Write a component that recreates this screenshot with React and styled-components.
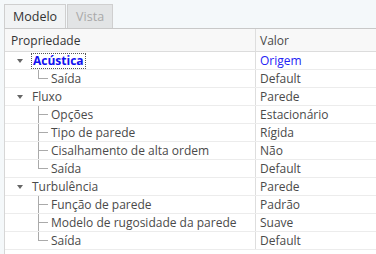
import React from "react";
import styled, { createGlobalStyle } from "styled-components";

const GlobalStyle = createGlobalStyle`
  body {
    margin: 0;
    background: #f4f8fa;
    font-family: "Open Sans", "Noto Sans", sans-serif;
  }
`;

const Page = styled.div`
  width: 376px;
  height: 254px;
  overflow: hidden;
  padding: 4px 0 0 4px;
  box-sizing: border-box;
  display: flex;
  flex-direction: column;
`;

const TabBar = styled.div`
  display: flex;
  height: 24px;
  flex-shrink: 0;
`;

const Tab = styled.div`
  display: flex;
  align-items: center;
  padding: 0 8px;
  font-size: 12.5px;
  border: 1px solid #cfcfcf;
  border-bottom: none;
  margin-right: 1px;
  color: ${(p) => (p.$active ? "#333" : "#a9a9a9")};
  background: ${(p) => (p.$active ? "#f1f3f4" : "#e2e4e5")};
`;

const Panel = styled.div`
  flex: 1;
  min-height: 0;
  background: #fff;
  border-top: 1px solid #c8c8c8;
  border-left: 1px solid #d6d6d6;
`;

const Row = styled.div`
  display: grid;
  grid-template-columns: 250px 1fr;
  height: 17px;
  border-bottom: 1px solid #ececec;
  font-size: 12px;
  color: #4a4a4a;
`;

const HeaderRow = styled(Row)`
  height: 22px;
  background: #f8f8f8;
  border-bottom: 1px solid #dcdcdc;
  color: #333;
`;

const Cell = styled.div`
  display: flex;
  align-items: center;
  position: relative;
  white-space: nowrap;
  overflow: hidden;
  padding-left: ${(p) => p.$indent || 6}px;
`;

const ValueCell = styled(Cell)`
  border-left: 1px solid #dedede;
  padding-left: 4px;
  color: ${(p) => (p.$blue ? "#2323f5" : "#4a4a4a")};
`;

const Arrow = styled.span`
  width: 0;
  height: 0;
  border-left: 3px solid transparent;
  border-right: 3px solid transparent;
  border-top: 4px solid #666;
  margin: 0 9px 0 6px;
`;

const Focus = styled.span`
  color: #1010f0;
  font-weight: 700;
  outline: 1px dotted #555;
  padding: 0 1px;
  line-height: 14px;
`;

const Connector = styled.span`
  position: absolute;
  left: 33px;
  top: 0;
  width: 9px;
  height: ${(p) => (p.$last ? "9px" : "17px")};
  border-left: 1px solid #aaa;
  &::after {
    content: "";
    position: absolute;
    left: 0;
    top: 8px;
    width: 9px;
    border-top: 1px solid #aaa;
  }
`;

const groups = [
  {
    name: "Acústica",
    value: "Origem",
    focus: true,
    children: [["Saída", "Default"]],
  },
  {
    name: "Fluxo",
    value: "Parede",
    children: [
      ["Opções", "Estacionário"],
      ["Tipo de parede", "Rígida"],
      ["Cisalhamento de alta ordem", "Não"],
      ["Saída", "Default"],
    ],
  },
  {
    name: "Turbulência",
    value: "Parede",
    children: [
      ["Função de parede", "Padrão"],
      ["Modelo de rugosidade da parede", "Suave"],
      ["Saída", "Default"],
    ],
  },
];

export default function App() {
  return (
    <Page>
      <GlobalStyle />
      <TabBar>
        <Tab $active>Modelo</Tab>
        <Tab>Vista</Tab>
      </TabBar>
      <Panel>
        <HeaderRow>
          <Cell $indent={6}>Propriedade</Cell>
          <ValueCell>Valor</ValueCell>
        </HeaderRow>
        {groups.map((g) => (
          <React.Fragment key={g.name}>
            <Row>
              <Cell $indent={0}>
                <Arrow />
                {g.focus ? <Focus>{g.name}</Focus> : g.name}
              </Cell>
              <ValueCell $blue={g.focus}>{g.value}</ValueCell>
            </Row>
            {g.children.map(([label, value], i) => (
              <Row key={label + i}>
                <Cell $indent={46}>
                  <Connector $last={i === g.children.length - 1} />
                  {label}
                </Cell>
                <ValueCell>{value}</ValueCell>
              </Row>
            ))}
          </React.Fragment>
        ))}
        <Row />
      </Panel>
    </Page>
  );
}
